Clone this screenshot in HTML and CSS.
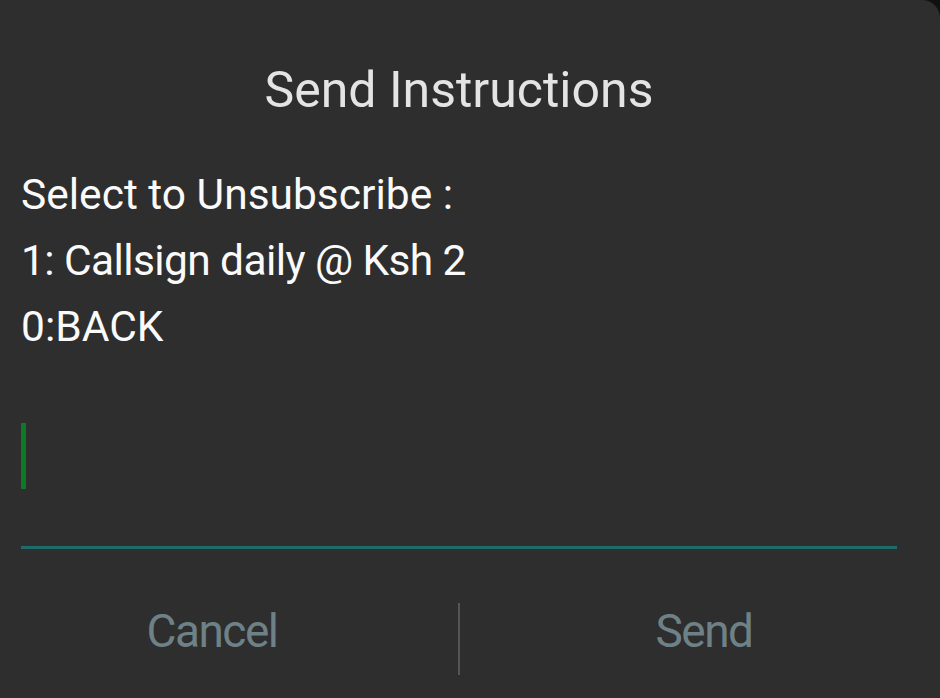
FILE: index.html
```html
<!DOCTYPE html>
<html lang="en">
<head>
    <meta charset="UTF-8">
    <meta name="viewport" content="width=device-width, initial-scale=1.0">
    <title>Send Instructions</title>
    <link rel="stylesheet" href="styles.css">
</head>
<body>

<div class="dialog">
    <h1 class="title">Send Instructions</h1>

    <div class="message">
        <div>Select to Unsubscribe :</div>
        <div class="narrow">1: Callsign daily @ Ksh 2</div>
        <div>0:BACK</div>
    </div>

    <div class="reply">
        <span class="caret"></span>
    </div>

    <div class="actions">
        <span class="btn btn-cancel">Cancel</span>
        <span class="divider"></span>
        <span class="btn btn-send">Send</span>
    </div>
</div>

</body>
</html>
```

FILE: styles.css
```css
html, body {
    margin: 0;
    height: 100%;
}
body {
    background-color: #111;
    overflow: hidden;
    font-family: Roboto, "Noto Sans", sans-serif;
}
.dialog {
    height: 100%;
    box-sizing: border-box;
    background-color: #2e2e2e;
    border-top-right-radius: 18px;
    padding: 0 43px 0 21px;
}
.title {
    margin: 0;
    padding-top: 58px;
    font-size: 50px;
    font-weight: 400;
    line-height: 64px;
    text-align: center;
    color: #e4e4e4;
}
.message {
    margin-top: 40px;
    font-size: 42.5px;
    line-height: 66px;
    color: #fafafa;
}
.message .narrow {
    letter-spacing: -0.6px;
}
.reply {
    margin-top: 63px;
    height: 123px;
    border-bottom: 3px solid #1e6b6b;
}
.caret {
    display: block;
    width: 5px;
    height: 66px;
    background-color: #0d7a27;
}
.actions {
    display: flex;
    align-items: center;
    margin-top: 54px;
    margin-left: -21px;
    margin-right: -43px;
}
.btn {
    flex-shrink: 0;
    font-size: 46px;
    color: #6e8186;
    text-align: center;
    letter-spacing: -1.5px;
    padding-bottom: 16px;
}
.btn-cancel {
    width: 424px;
}
.divider {
    flex-shrink: 0;
    width: 2px;
    height: 72px;
    margin-left: 34px;
    background-color: #555;
}
.btn-send {
    width: 488px;
}
```
